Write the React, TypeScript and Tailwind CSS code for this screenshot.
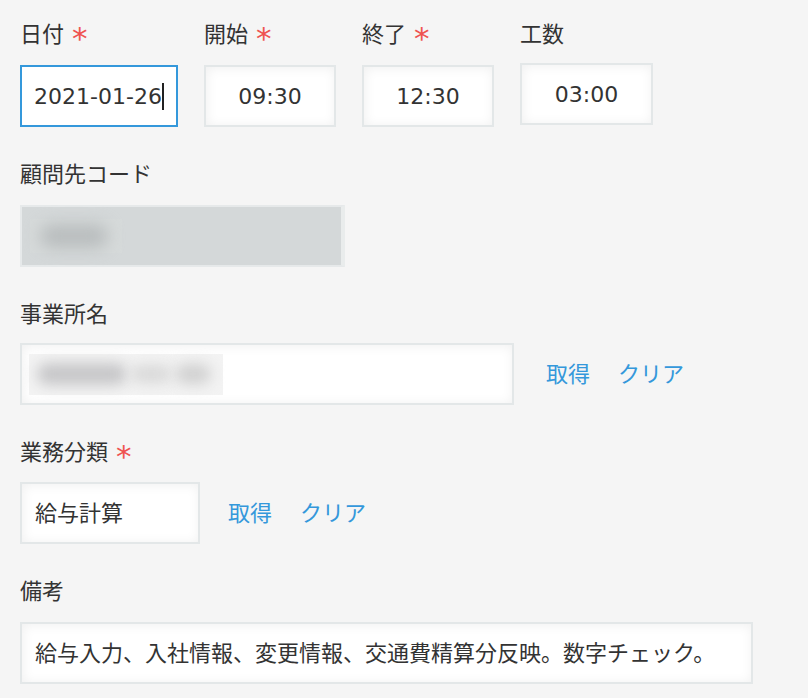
import React from 'react';

const font = { fontFamily: '"DejaVu Sans", "Noto Sans CJK JP", sans-serif' };

function Label({ text, required }: { text: string; required?: boolean }) {
  return (
    <div className="flex items-center h-[30px] text-[22px] text-[#333] leading-[30px] whitespace-nowrap">
      <span>{text}</span>
      {required && (
        <span className="ml-[8px] text-[#ef5350] text-[31px] leading-[30px] relative top-[3px]">*</span>
      )}
    </div>
  );
}

const boxBase =
  'h-[62px] border-2 border-[#e3e7e8] bg-white shadow-[inset_1px_1px_12px_#f0f0f0] flex items-center text-[22px] text-[#333]';

function TimeBox({ label, value, required, width }: { label: string; value: string; required?: boolean; width: string }) {
  return (
    <div className="flex flex-col gap-[15px]">
      <Label text={label} required={required} />
      <div className={`${boxBase} ${width} justify-center`}>{value}</div>
    </div>
  );
}

export default function App() {
  return (
    <div className="min-h-[698px] w-[808px] bg-[#f5f5f5] pl-[20px] pt-[20px]" style={font}>
      {/* 日付 / 時間 */}
      <div className="flex gap-[26px] mb-[33px]">
        <div className="flex flex-col gap-[15px]">
          <Label text="日付" required />
          <div className="h-[62px] w-[158px] border-2 border-[#3498db] bg-white flex items-center justify-center text-[22px] text-[#333]">
            <span>2021-01-26</span>
            <span className="inline-block w-[2px] h-[27px] bg-[#222]" />
          </div>
        </div>
        <TimeBox label="開始" value="09:30" required width="w-[132px]" />
        <TimeBox label="終了" value="12:30" required width="w-[132px]" />
        <div className="flex flex-col gap-[13px]">
          <Label text="工数" />
          <div className={`${boxBase} w-[133px] justify-center`}>03:00</div>
        </div>
      </div>

      {/* 顧問先コード */}
      <div className="flex flex-col gap-[15px] mb-[33px]">
        <Label text="顧問先コード" />
        <div className="h-[62px] w-[325px] border-2 border-[#e6e9ea] bg-[#d4d8d9] flex items-center pl-[8px] border-r-[4px] border-r-[#e9ecec]">
          <div className="w-[92px] h-[34px] bg-[#d6dada] flex items-center pl-[10px]">
            <div className="w-[68px] h-[24px] rounded-full bg-[#b9bdbe] blur-[8px]" />
          </div>
        </div>
      </div>

      {/* 事業所名 */}
      <div className="flex flex-col gap-[13px] mb-[33px]">
        <Label text="事業所名" />
        <div className="flex items-center">
          <div className={`${boxBase} w-[494px] pl-[7px]`}>
            <div className="w-[194px] h-[41px] bg-[#f3f3f3] flex items-center gap-[4px] pl-[8px]">
              <div className="w-[90px] h-[22px] rounded-full bg-[#c6c6c8] blur-[7px]" />
              <div className="w-[40px] h-[18px] rounded-full bg-[#d8d8d8] blur-[7px]" />
              <div className="w-[36px] h-[20px] rounded-full bg-[#d0d0d0] blur-[7px]" />
            </div>
          </div>
          <span className="text-[#3498db] text-[22px] ml-[32px]">取得</span>
          <span className="text-[#3498db] text-[22px] ml-[28px]">クリア</span>
        </div>
      </div>

      {/* 業務分類 */}
      <div className="flex flex-col gap-[14px] mb-[33px]">
        <Label text="業務分類" required />
        <div className="flex items-center">
          <div className={`${boxBase} w-[180px] pl-[13px]`}>給与計算</div>
          <span className="text-[#3498db] text-[22px] ml-[28px]">取得</span>
          <span className="text-[#3498db] text-[22px] ml-[28px]">クリア</span>
        </div>
      </div>

      {/* 備考 */}
      <div className="flex flex-col gap-[15px]">
        <Label text="備考" />
        <div className={`${boxBase} w-[733px] pl-[13px] whitespace-nowrap`}>
          給与入力、入社情報、変更情報、交通費精算分反映。数字チェック。
        </div>
      </div>
    </div>
  );
}
